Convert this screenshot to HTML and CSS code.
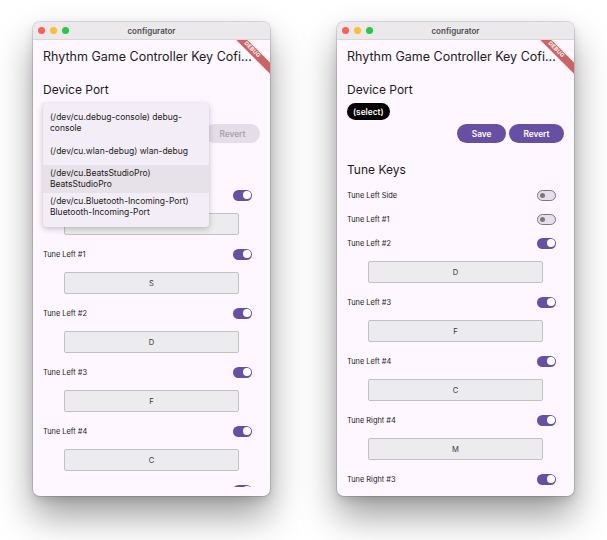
FILE: index.html
```html
<!DOCTYPE html>
<html lang="en">
<head>
<meta charset="utf-8">
<title>configurator</title>
<link rel="stylesheet" href="styles.css">
</head>
<body>
<div class="desk">
  <div class="window">
    <div class="titlebar">
      <div class="lights"><span class="light red"></span><span class="light yellow"></span><span class="light green"></span></div>
      <div class="wtitle">configurator</div>
      <div></div>
    </div>
    <div class="app">
      <div class="appbar"><h1>Rhythm Game Controller Key Cofi...</h1></div>
      <div class="body">
        <h2>Device Port</h2>
        <div class="pill-row"><span class="pill">(select)</span></div>
        <div class="actions"><button class="btn" disabled>Save</button><button class="btn" disabled>Revert</button></div>
        <h2 class="tk">Tune Keys</h2>
        <div class="rows">
          <div class="row"><span>Tune Left Side</span><span class="switch on"></span></div>
          <div class="key">Left Shift</div>
          <div class="row"><span>Tune Left #1</span><span class="switch on"></span></div>
          <div class="key">S</div>
          <div class="row"><span>Tune Left #2</span><span class="switch on"></span></div>
          <div class="key">D</div>
          <div class="row"><span>Tune Left #3</span><span class="switch on"></span></div>
          <div class="key">F</div>
          <div class="row"><span>Tune Left #4</span><span class="switch on"></span></div>
          <div class="key">C</div>
          <div class="row"><span></span><span class="switch on"></span></div>
        </div>
      </div>
      <div class="menu">
        <div class="item">(/dev/cu.debug-console) debug-<br>console</div>
        <div class="item">(/dev/cu.wlan-debug) wlan-debug</div>
        <div class="item hl">(/dev/cu.BeatsStudioPro)<br>BeatsStudioPro</div>
        <div class="item">(/dev/cu.Bluetooth-Incoming-Port)<br>Bluetooth-Incoming-Port</div>
      </div>
      <div class="banner">DEBUG</div>
    </div>
  </div>

  <div class="window">
    <div class="titlebar">
      <div class="lights"><span class="light red"></span><span class="light yellow"></span><span class="light green"></span></div>
      <div class="wtitle">configurator</div>
      <div></div>
    </div>
    <div class="app">
      <div class="appbar"><h1>Rhythm Game Controller Key Cofi...</h1></div>
      <div class="body">
        <h2>Device Port</h2>
        <div class="pill-row"><span class="pill">(select)</span></div>
        <div class="actions"><button class="btn">Save</button><button class="btn">Revert</button></div>
        <h2 class="tk">Tune Keys</h2>
        <div class="rows">
          <div class="row"><span>Tune Left Side</span><span class="switch off"></span></div>
          <div class="row"><span>Tune Left #1</span><span class="switch off"></span></div>
          <div class="row"><span>Tune Left #2</span><span class="switch on"></span></div>
          <div class="key">D</div>
          <div class="row"><span>Tune Left #3</span><span class="switch on"></span></div>
          <div class="key">F</div>
          <div class="row"><span>Tune Left #4</span><span class="switch on"></span></div>
          <div class="key">C</div>
          <div class="row"><span>Tune Right #4</span><span class="switch on"></span></div>
          <div class="key">M</div>
          <div class="row"><span>Tune Right #3</span><span class="switch on"></span></div>
        </div>
      </div>
      <div class="banner">DEBUG</div>
    </div>
  </div>
</div>
</body>
</html>
```

FILE: styles.css
```css
html, body {
  height: 100%;
}

body {
  margin: 0;
  background: #ffffff;
  font-family: Inter, "Noto Sans", "Liberation Sans", sans-serif;
  color: #1d1b20;
}

.desk {
  display: flex;
  align-items: flex-start;
  gap: 67px;
  padding: 22px 0 0 33px;
}

.window {
  flex: none;
  width: 237px;
  height: 474px;
  border-radius: 7px;
  overflow: hidden;
  display: flex;
  flex-direction: column;
  background: #fef7ff;
  box-shadow: 0 0 0 1px rgba(0, 0, 0, 0.12), 0 20px 36px rgba(0, 0, 0, 0.38), 0 4px 10px rgba(0, 0, 0, 0.12);
}

.titlebar {
  flex: none;
  height: 18px;
  box-sizing: border-box;
  background: #ebe9eb;
  border-bottom: 1px solid #d8d6d9;
  display: grid;
  grid-template-columns: 1fr auto 1fr;
  align-items: center;
}

.lights {
  display: flex;
  gap: 4.7px;
  padding-left: 5.3px;
}

.light {
  width: 7px;
  height: 7px;
  border-radius: 50%;
}

.red { background: #fe5f57; }
.yellow { background: #febc2e; }
.green { background: #28c840; }

.wtitle {
  font-size: 8px;
  font-weight: 600;
  color: #4e4d50;
}

.app {
  flex: 1;
  min-height: 0;
  position: relative;
  display: flex;
  flex-direction: column;
  padding-bottom: 9px;
  overflow: hidden;
}

.appbar {
  flex: none;
  height: 32px;
  display: flex;
  align-items: center;
  padding: 0 10px;
}

.appbar h1 {
  margin: 0;
  font-size: 12.5px;
  font-weight: 400;
  white-space: nowrap;
  color: #1d1b20;
}

.body {
  flex: 1;
  min-height: 0;
  overflow: hidden;
  padding: 10px 10px 0;
}

h2 {
  margin: 0;
  font-size: 12px;
  line-height: 16px;
  font-weight: 400;
  color: #1d1b20;
}

.pill-row {
  margin-top: 5px;
  display: flex;
}

.pill {
  height: 17px;
  padding: 0 6px;
  border-radius: 9px;
  background: #000;
  color: #fff;
  font-size: 8.3px;
  font-weight: 600;
  display: flex;
  align-items: center;
}

.actions {
  margin-top: 4px;
  display: flex;
  justify-content: flex-end;
  gap: 3px;
}

.btn {
  height: 19px;
  padding: 0 14.5px;
  border: 0;
  border-radius: 10px;
  background: #6750a4;
  color: #fff;
  font-family: Inter, "Noto Sans", sans-serif;
  font-size: 8.3px;
  font-weight: 600;
}

.btn:disabled {
  background: #e5dee8;
  color: #a9a4ad;
}

.tk {
  margin-top: 19px;
}

.rows {
  margin-top: 5px;
}

.row {
  height: 24px;
  display: flex;
  align-items: center;
  justify-content: space-between;
  padding-right: 8px;
  font-size: 7.4px;
  color: #1d1b20;
}

.switch {
  position: relative;
  width: 19px;
  height: 11px;
  box-sizing: border-box;
  border-radius: 6px;
}

.switch::after {
  content: "";
  position: absolute;
  border-radius: 50%;
}

.switch.on {
  background: #6750a4;
}

.switch.on::after {
  width: 8px;
  height: 8px;
  right: 1.5px;
  top: 1.5px;
  background: #fff;
}

.switch.off {
  background: #e7e0ea;
  border: 1px solid #7b767f;
}

.switch.off::after {
  width: 5px;
  height: 5px;
  left: 2px;
  top: 2px;
  background: #7b767f;
}

.key {
  width: 175px;
  height: 22px;
  margin: 6px auto 7px;
  box-sizing: border-box;
  border: 1px solid #c3c1c6;
  border-radius: 2px;
  background: #ececef;
  display: flex;
  align-items: center;
  justify-content: center;
  font-size: 7.6px;
  color: #3a383d;
}

.menu {
  position: absolute;
  left: 10px;
  top: 63px;
  width: 166px;
  padding: 6px 0 6px;
  background: #f3edf7;
  border-radius: 3px;
  box-shadow: 0 2px 6px rgba(0, 0, 0, 0.22), 0 0 1px rgba(0, 0, 0, 0.12);
}

.item {
  height: 28px;
  padding: 0 7px;
  display: flex;
  align-items: center;
  font-size: 8.5px;
  line-height: 10.8px;
  color: #1d1b20;
}

.item.hl {
  background: #e7e1ea;
}

.banner {
  position: absolute;
  left: 189px;
  top: 6.3px;
  width: 60px;
  height: 7.5px;
  transform: rotate(45deg);
  background: rgba(183, 28, 28, 0.68);
  color: #fff;
  font-size: 5.5px;
  font-weight: 700;
  line-height: 7.5px;
  text-align: center;
  letter-spacing: 0.2px;
}
```
